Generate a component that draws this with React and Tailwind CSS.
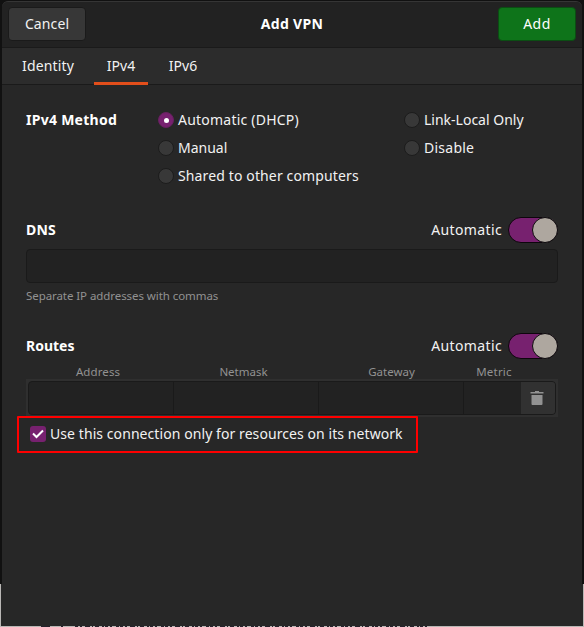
import React from "react";

const shade = "border-[#1a1a1a]";

function Radio({ label, on, className }) {
  return (
    <div className="flex h-7 items-center">
      <span
        className={
          on
            ? "flex size-4 items-center justify-center rounded-full border border-[#67205f] bg-[#77216f]"
            : "size-4 rounded-full border border-[#1c1c1c] bg-[#383838]"
        }
      >
        {on && <span className="size-[5px] rounded-full bg-white" />}
      </span>
      <span className={`ml-1 ${className}`}>{label}</span>
    </div>
  );
}

function AutoSwitch() {
  return (
    <div className="flex items-center">
      <span className="mr-1.5 tracking-[0.38px]">Automatic</span>
      <span className="flex h-[26px] w-[50px] justify-end rounded-full border border-[#0d060c] bg-[#77216f]">
        <span className="-my-px -mr-px size-[26px] rounded-full border border-[#0d0b0d] bg-[#aea79f]" />
      </span>
    </div>
  );
}

export default function App() {
  return (
    <div className="relative h-[627px] w-[584px] overflow-hidden bg-[#111111] font-['Noto_Sans',sans-serif] text-[14px] leading-5 whitespace-nowrap text-[#f2f2f2]">
      <div className="absolute inset-x-0 top-[584px] bottom-0 bg-[#b9b7b5]" />
      <svg className="absolute bottom-0 left-[41px]" width="389" height="1" viewBox="0 0 389 1">
        <path d="M0 .5h9M20 .5h2" stroke="#26222c" />
        <path d="M34 .5h355" stroke="#26222c" strokeDasharray="3 2 2 3 5 2 1 2 4 3 2 1 3 2 2 4 3 1" />
      </svg>
      <div className="absolute inset-x-px top-[584px] bottom-px bg-[#272727]" />

      <div className="relative mx-0.5 mt-px flex h-[625px] flex-col rounded-t-[6px] border-t border-[#353535] bg-[#272727]">
        <header className={`flex h-[46px] items-start justify-between rounded-t-[6px] border-b bg-[#222222] pt-[5px] pr-1.5 pl-1.5 ${shade}`}>
          <button className="flex h-[34px] w-[78px] items-center justify-center rounded-[4px] border border-[#1a1a1a] bg-[#373737] tracking-[0.1px]">Cancel</button>
          <h1 className="flex h-[34px] items-center font-bold tracking-[0.32px] text-white">Add VPN</h1>
          <button className="flex h-[34px] w-[78px] items-center justify-center rounded-[4px] border border-[#0b4d13] bg-[#0e741a] tracking-[0.5px] text-white">Add</button>
        </header>

        <nav className={`flex h-[37px] border-b bg-[#2c2c2c] pl-1.5 ${shade}`}>
          <div className="flex w-[80px] items-center pl-[14px] tracking-[0.15px]">Identity</div>
          <div className="mx-1.5 -mb-px flex w-[54px] items-center justify-center border-b-[3px] border-[#e24e1b] pt-[2px]">IPv4</div>
          <div className="ml-0.5 flex w-[54px] items-center justify-center">IPv6</div>
        </nav>

        <main className="flex flex-col px-6">
          <section className="mt-[21px] flex h-[84px]">
            <h2 className="flex h-7 w-[132px] items-center font-bold tracking-[0.27px] text-white">IPv4 Method</h2>
            <div className="w-[246px]">
              <Radio on label="Automatic (DHCP)" className="tracking-[0.22px]" />
              <Radio label="Manual" className="tracking-normal" />
              <Radio label="Shared to other computers" className="tracking-[0.13px]" />
            </div>
            <div>
              <Radio label="Link-Local Only" className="tracking-normal" />
              <Radio label="Disable" className="tracking-[0.25px]" />
            </div>
          </section>

          <section className="mt-[27px]">
            <div className="flex h-[26px] items-center justify-between">
              <h2 className="font-bold tracking-[0.2px] text-white">DNS</h2>
              <AutoSwitch />
            </div>
            <div className={`mt-1.5 h-[34px] rounded-[4px] border bg-[#222222] ${shade}`} />
            <p className="mt-1 h-[18px] text-[11.5px] leading-[18px] tracking-[-0.07px] text-[#929292]">Separate IP addresses with commas</p>
          </section>

          <section className="mt-7">
            <div className="flex h-[26px] items-center justify-between">
              <h2 className="font-bold text-white">Routes</h2>
              <AutoSwitch />
            </div>
            <div className="mt-1 flex h-4 text-center text-[11.5px] leading-[18px] text-[#929292]">
              <span className="w-[144px] tracking-[0.1px]">Address</span>
              <span className="w-[147px]">Netmask</span>
              <span className="w-[149px]">Gateway</span>
              <span className="w-[56px] tracking-[0.2px]">Metric</span>
            </div>
            <div className="h-[38px] w-[532px] bg-[#2f2f2f] p-0.5">
              <div className="flex h-[34px] w-[528px] overflow-hidden rounded-[4px] border border-[#1a1a1a] bg-[#222222]">
                <span className={`w-[145px] border-r ${shade}`} />
                <span className={`w-[145px] border-r ${shade}`} />
                <span className={`w-[145px] border-r ${shade}`} />
                <span className="w-[57px]" />
                <span className="flex flex-1 items-center justify-center bg-[#313131] pr-0.5">
                  <svg width="14" height="16" viewBox="0 0 14 16" fill="#929292">
                    <path d="M5 1h4v1h4.500v1.500H.5V2H5zM1.500 5h11v9q0 1-1 1h-9q-1 0-1-1z" />
                  </svg>
                </span>
              </div>
            </div>
            <div className="-mt-px -ml-[9px] flex h-[37px] w-[401px] items-center rounded-[1px] border-2 border-[#ff0000] pb-px pl-[11px]">
              <span className="flex size-4 items-center justify-center rounded-[3px] bg-[#77216f]">
                <svg width="12" height="10" viewBox="0 0 12 10" fill="none" stroke="#fff" strokeWidth="2">
                  <path d="M1 4.500l3.500 3.500L11 1.500" />
                </svg>
              </span>
              <span className="ml-1 tracking-[0.075px]">Use this connection only for resources on its network</span>
            </div>
          </section>
        </main>
      </div>
    </div>
  );
}
